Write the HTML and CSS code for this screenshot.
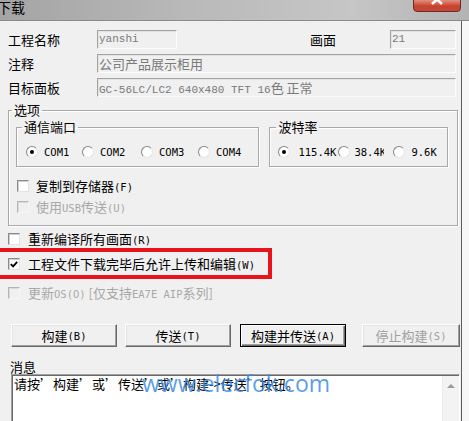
FILE: index.html
```html
<!DOCTYPE html>
<html lang="zh">
<head>
<meta charset="utf-8">
<title>下载</title>
<link rel="stylesheet" href="styles.css">
</head>
<body>
<div class="window">
  <div class="titlebar">
    <span class="title">下载</span>
    <span class="close"><svg width="48" height="12" viewBox="0 0 48 12"><path d="M19 -4 L29 5 M29 -4 L19 5" stroke="#fff" stroke-width="2.6" fill="none"/></svg></span>
  </div>
  <div class="client">
    <div class="row">
      <span class="lbl">工程名称</span>
      <span class="field w-name mono">yanshi</span>
      <span class="lbl2">画面</span>
      <span class="field w-num mono">21</span>
    </div>
    <div class="row">
      <span class="lbl">注释</span>
      <span class="field grow">公司产品展示柜用</span>
    </div>
    <div class="row">
      <span class="lbl">目标面板</span>
      <span class="field grow mono">GC-56LC/LC2 640x480 TFT 16<span class="cjk">色 正常</span></span>
    </div>

    <fieldset class="group options">
      <legend class="lg-options">选项</legend>
      <div class="subgroups">
        <fieldset class="group ports">
          <legend class="lg-ports">通信端口</legend>
          <div class="radios">
            <span class="radio w56"><span class="rb on"></span><span class="rt">COM1</span></span>
            <span class="radio w59"><span class="rb"></span><span class="rt">COM2</span></span>
            <span class="radio w57"><span class="rb"></span><span class="rt">COM3</span></span>
            <span class="radio"><span class="rb"></span><span class="rt">COM4</span></span>
          </div>
        </fieldset>
        <fieldset class="group baud">
          <legend class="lg-baud">波特率</legend>
          <div class="radios">
            <span class="radio w60"><span class="rb on"></span><span class="rt wide">115.4K</span></span>
            <span class="radio w55"><span class="rb"></span><span class="rt clip">38.4K</span></span>
            <span class="radio"><span class="rb"></span><span class="rt">9.6K</span></span>
          </div>
        </fieldset>
      </div>
      <div class="check inner first"><span class="cb"></span><span class="ct">复制到存储器<span class="key">(F)</span></span></div>
      <div class="check inner second disabled"><span class="cb"></span><span class="ct">使用<span class="key">USB</span>传送<span class="key">(U)</span></span></div>
    </fieldset>

    <div class="check outer c1"><span class="cb"></span><span class="ct">重新编译所有画面<span class="key">(R)</span></span></div>
    <div class="check outer c2"><span class="cb"><svg width="11" height="11" viewBox="0 0 11 11"><path d="M2 5 L4.5 7.5 L9 2.5" stroke="#000" stroke-width="2" fill="none"/></svg></span><span class="ct">工程文件下载完毕后允许上传和编辑<span class="key">(W)</span></span></div>
    <div class="check outer c3 disabled"><span class="cb"></span><span class="ct">更新<span class="key">OS(O)</span> [仅支持<span class="key">EA7E AIP</span>系列]</span></div>

    <div class="buttons">
      <span class="btn b1">构建<span class="key">(B)</span></span>
      <span class="btn b2">传送<span class="key">(T)</span></span>
      <span class="btn b3 default">构建并传送<span class="key">(A)</span></span>
      <span class="btn b4 off">停止构建<span class="key">(S)</span></span>
    </div>

    <div class="msg-label">消息</div>
    <div class="msgbox">
      <div class="msgtext">请按’构建’或’传送’或’构建-&gt;传送’按钮。</div>
      <div class="scroll"><span class="arrow"></span></div>
    </div>
  </div>
  <div class="highlight"></div>
  <div class="watermark">www.elecfok.com</div>
</div>
</body>
</html>
```

FILE: styles.css
```css
* { box-sizing: border-box; }
html, body { margin: 0; padding: 0; }
body {
  width: 469px;
  height: 421px;
  overflow: hidden;
  background: #f7f7f7;
  font-family: "Noto Sans CJK SC", "Noto Sans", sans-serif;
  font-size: 13px;
  color: #000;
}
.window { position: relative; width: 469px; height: 421px; overflow: hidden; }
.titlebar {
  position: relative;
  height: 21px;
  background: linear-gradient(to right, #a4a4a4 0%, #b9b9b9 40%, #c6c6c6 75%, #b3b3b3 100%);
  border-bottom: 1px solid #8a8a8a;
}
.title {
  position: absolute;
  left: -3px;
  top: -1px;
  font-size: 14px;
  line-height: 16px;
  color: #000;
}
.close {
  position: absolute;
  left: 413px;
  top: -1px;
  width: 48px;
  height: 13px;
  background: linear-gradient(#e2917f, #c9432f 55%, #c0493a);
  border: 1px solid #6f2a22;
  border-radius: 0 0 4px 4px;
  overflow: hidden;
}
.close svg { display: block; margin: -1px 0 0 -1px; }

.client {
  width: 462px;
  height: 400px;
  background: #f0f0f0;
  border-right: 1px solid #5c5c5c;
  padding: 9px 5px 0 8px;
}
.row {
  display: flex;
  align-items: center;
  height: 19px;
  margin-bottom: 5px;
}
.lbl { width: 89px; line-height: 16px; }
.lbl2 { width: 80px; margin-left: 133px; line-height: 16px; }
.field {
  height: 19px;
  background: #f0f0f0;
  border: 1px solid;
  border-color: #a3a3a3 #fbfbfb #fbfbfb #a3a3a3;
  box-shadow: inset 1px 1px 0 #e3e3e3;
  color: #7a7a7a;
  line-height: 17px;
  padding: 0 1px;
  white-space: nowrap;
  overflow: hidden;
}
.w-name { width: 80px; }
.w-num { width: 66px; }
.grow { flex: 1; }
.mono { font-family: "Liberation Mono", monospace; font-size: 11px; }
.cjk { font-family: "Noto Sans CJK SC", sans-serif; font-size: 13px; }

fieldset.group {
  margin: 0;
  min-width: 0;
  border: 1px solid #a9a9a9;
  box-shadow: inset 1px 1px 0 #fff, 1px 1px 0 #fff;
}
legend { line-height: 16px; padding: 0 2px; }
.options {
  width: 450px;
  margin: 5px 0 0 -1px;
  padding: 1px 9px 10px 7px;
}
.lg-options { margin-left: -4px; }
.subgroups { display: flex; gap: 10px; }
.ports { width: 244px; padding: 9px 4px 6px 9px; }
.lg-ports { margin-left: -4px; }
.baud { width: 179px; padding: 9px 4px 6px 8px; }
.lg-baud { margin-left: -2px; }
.radios { display: flex; align-items: center; height: 16px; }
.radio { display: flex; align-items: center; flex: none; }
.w55 { width: 55px; }
.w56 { width: 56px; }
.w57 { width: 57px; }
.w59 { width: 59px; }
.w60 { width: 60px; }
.rb {
  position: relative;
  width: 12px;
  height: 12px;
  border-radius: 50%;
  border: 1px solid;
  border-color: #858585 #e4e4e4 #e4e4e4 #858585;
  background: #fff;
  flex: none;
  z-index: 1;
}
.rb.on::after {
  content: "";
  position: absolute;
  left: 3px;
  top: 3px;
  width: 4px;
  height: 4px;
  border-radius: 50%;
  background: #000;
}
.rt {
  margin-left: 6px;
  font-family: "DejaVu Sans Mono", monospace;
  font-size: 10.5px;
  line-height: 16px;
  white-space: nowrap;
}
.rt.wide { margin-left: 8px; }
.rt.clip { width: 30px; overflow: hidden; margin-left: 4px; }

.check {
  display: flex;
  align-items: center;
  height: 16px;
}
.cb {
  width: 12px;
  height: 12px;
  flex: none;
  background: #fff;
  border: 1px solid;
  border-color: #8a8a8a #e2e2e2 #e2e2e2 #8a8a8a;
  box-shadow: inset 1px 1px 0 #cfcfcf;
  display: flex;
  align-items: center;
  justify-content: center;
}
.ct { margin-left: 7px; line-height: 16px; white-space: nowrap; }
.key { font-family: "DejaVu Sans Mono", monospace; font-size: 10.5px; }
.disabled .ct { color: #a8a8a8; }
.disabled .cb { background: #f0f0f0; border-color: #b4b4b4 #f6f6f6 #f6f6f6 #b4b4b4; box-shadow: inset 1px 1px 0 #dcdcdc; }
.inner.first { margin: 11px 0 0 1px; }
.inner.second { margin: 5px 0 0 1px; }
.outer .ct { margin-left: 8px; }
.c1 { margin-top: 5px; }
.c2 { margin-top: 9px; }
.c3 { margin-top: 13px; }

.buttons { display: flex; margin-top: 23px; height: 23px; }
.btn {
  flex: none;
  width: 106px;
  height: 23px;
  display: flex;
  align-items: center;
  justify-content: center;
  background: #f0f0f0;
  border: 1px solid;
  border-color: #fff #696969 #696969 #fff;
  box-shadow: inset -1px -1px 0 #a0a0a0, inset 1px 1px 0 #e3e3e3;
  line-height: 16px;
  white-space: nowrap;
}
.b1 { margin-left: 3px; }
.b2 { margin-left: 8px; }
.b3 { margin-left: 9px; }
.b4 { margin-left: 16px; width: 98px; }
.btn.default {
  border-color: #000;
  box-shadow: inset 1px 1px 0 #fff, inset -1px -1px 0 #696969, inset -2px -2px 0 #a0a0a0;
}
.btn.off { color: #a0a0a0; }

.msg-label { margin: 13px 0 0 2px; line-height: 14px; }
.msgbox {
  display: flex;
  width: 449px;
  height: 48px;
  margin-left: 3px;
  background: #fff;
  border: 1px solid;
  border-color: #a0a0a0 #fff #fff #a0a0a0;
  box-shadow: inset 1px 1px 0 #696969;
  padding: 1px 0 0 1px;
}
.msgtext { flex: 1; line-height: 16px; padding-left: 1px; white-space: nowrap; }
.scroll {
  width: 17px;
  background: #f3f3f3;
  border-left: 1px solid #ececec;
  display: flex;
  justify-content: center;
  padding-top: 8px;
}
.arrow {
  width: 0;
  height: 0;
  border-left: 4px solid transparent;
  border-right: 4px solid transparent;
  border-bottom: 4px solid #9a9a9a;
}

.highlight {
  position: absolute;
  left: -10px;
  top: 248px;
  width: 282px;
  height: 31px;
  border: 4px solid #e8141c;
}
.watermark {
  position: absolute;
  left: 142px;
  top: 368px;
  font-family: "Open Sans", sans-serif;
  font-size: 23px;
  line-height: 30px;
  color: rgba(60, 140, 230, 0.85);
  white-space: nowrap;
}
```
